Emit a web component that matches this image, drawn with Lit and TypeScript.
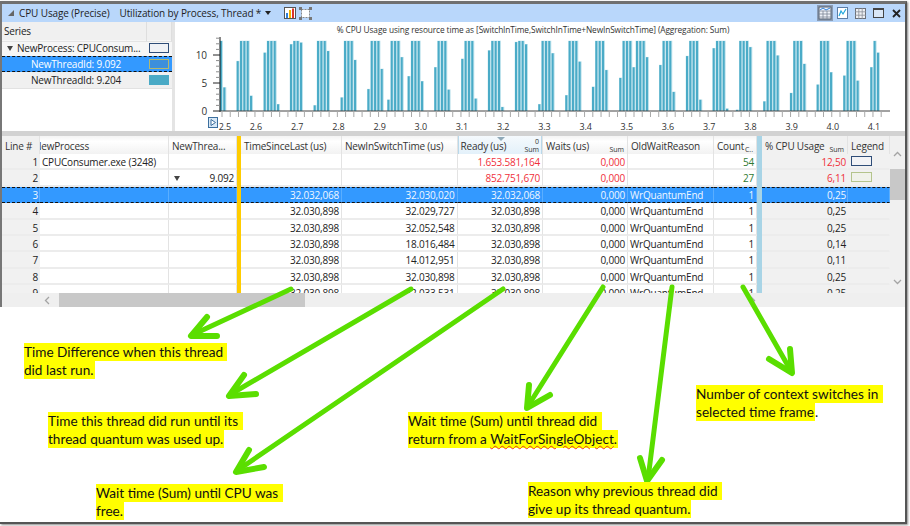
import { LitElement, html, css, svg } from "lit";
import { customElement } from "lit/decorators.js";

const GROUPS: [number, number[]][] = [
  [220, [12.5, 4.2]],
  [236.7, [8.9, 12.5, 12.5, 12.5, 2.7]],
  [263.7, [10.4, 12.5, 12.5, 12.5, 1.2]],
  [290, [11.9, 12.5, 12.5, 12.2]],
  [313.7, [1, 12.5, 12.5, 12.5, 10.7]],
  [340.7, [2.4, 12.5, 12.5, 12.5, 9.1]],
  [367.4, [3.9, 12.5, 12.5, 12.5, 7.5]],
  [387.4, [2, 12.5, 12.5, 12.5, 9.6]],
  [407.7, [6.2, 12.5, 12.5, 12.5, 5.3]],
  [434.3, [7.8, 12.5, 12.5, 12.5, 3.8]],
  [461.3, [9.3, 12.5, 12.5, 12.5, 2.2]],
  [488, [10.8, 12.5, 12.5, 12.5, 0.7]],
  [515, [12.3, 12.5, 12.5, 11.9]],
  [538.3, [1.2, 12.5, 12.5, 12.5, 10.3]],
  [565.3, [2.8, 12.5, 12.5, 12.5, 8.8]],
  [592, [4.3, 12.5, 12.5, 12.5, 7.3]],
  [619.3, [5.9, 12.5, 12.5, 12.5, 7.8, 12.5, 12.5, 12.5, 9.6]],
  [659.3, [8.2, 12.5, 12.5, 12.5, 3.4]],
  [686, [9.8, 12.5, 12.5, 12.5, 2]],
  [712.7, [11.2, 12.5, 12.5, 12.5, 0.4]],
  [736, [0.2, 12.5, 12.5, 12.5, 11.4]],
  [763.3, [1.7, 12.5, 12.5, 12.5, 9.9]],
  [790, [3.2, 12.5, 12.5, 12.5, 8.4]],
  [816.7, [4.7, 12.5, 12.5, 12.5, 6.9]],
  [843.3, [6.3, 12.5, 12.5, 12.5, 5.4]],
  [870.3, [7.8, 12.5, 10.4]],
];

const LABELS = ["2.6","2.7","2.8","2.9","3.0","3.1","3.2","3.3","3.4","3.5","3.6","3.7","3.8","3.9","4.0","4.1"];

interface Row {
  n: string; proc?: string; th?: string; a?: string; b?: string; c: string; d: string;
  why?: string; cnt: string; cpu: string; leg?: string; hot?: boolean; sel?: boolean;
}
const Q = "WrQuantumEnd";
const ROWS: Row[] = [
  { n: "1", proc: "CPUConsumer.exe (3248)", c: "1.653.581,164", d: "0,000", cnt: "54", cpu: "12,50", leg: "la", hot: true },
  { n: "2", th: "9.092", c: "852.751,670", d: "0,000", cnt: "27", cpu: "6,11", leg: "lb", hot: true },
  { n: "3", a: "32.032,068", b: "32.030,020", c: "32.032,068", d: "0,000", why: Q, cnt: "1", cpu: "0,25", sel: true },
  { n: "4", a: "32.030,898", b: "32.029,727", c: "32.030,898", d: "0,000", why: Q, cnt: "1", cpu: "0,25" },
  { n: "5", a: "32.030,898", b: "32.052,548", c: "32.030,898", d: "0,000", why: Q, cnt: "1", cpu: "0,25" },
  { n: "6", a: "32.030,898", b: "18.016,484", c: "32.030,898", d: "0,000", why: Q, cnt: "1", cpu: "0,14" },
  { n: "7", a: "32.030,898", b: "14.012,951", c: "32.030,898", d: "0,000", why: Q, cnt: "1", cpu: "0,11" },
  { n: "8", a: "32.030,898", b: "32.030,898", c: "32.030,898", d: "0,000", why: Q, cnt: "1", cpu: "0,25" },
  { n: "9", a: "32.030,898", b: "32.033,531", c: "32.030,898", d: "0,000", why: Q, cnt: "1", cpu: "0,25" },
];

const ARROWS: { line: string; head: string }[] = [
  { line: "291,289 192,335", head: "207,317 191,336 217,336" },
  { line: "411,289 231,394", head: "244,375 229,396 256,394" },
  { line: "503,289 238,470", head: "249,450 236,472 264,467" },
  { line: "603,287 528,406", head: "529,385 527,408 550,395" },
  { line: "672,287 648,479", head: "640,458 647,481 662,460" },
  { line: "743,287 791,371", head: "769,359 792,373 790,349" },
];

@customElement("app-root")
export class AppRoot extends LitElement {
  static styles = css`
    :host { display: block; width: 910px; height: 526px; position: relative; overflow: hidden; background: #fff;
      font-family: "Open Sans", "Noto Sans", sans-serif; color: #222; }
    .frame { box-sizing: border-box; margin-top: 1px; width: 907px; height: 523px; border-top: 3px solid #707070;
      border-right: 2px solid #555; border-bottom: 2px solid #555; box-shadow: 1px 1px 2px #888; background: #fff; }
    .app { box-sizing: border-box; border-left: 2px solid #777; height: 303px; display: flex; flex-direction: column; font-size: 10px; letter-spacing: -0.2px; }
    .title { height: 18px; flex: none; background: #b9d7fb; display: flex; align-items: center; font-size: 10px; letter-spacing: -0.12px; color: #1e1e1e; }
    .collapse { width: 0; height: 0; margin-left: 6px; border-style: solid; border-width: 0 0 6px 6px; border-color: transparent transparent #666 transparent; }
    .t1 { margin-left: 5px; }
    .t2 { margin-left: 10px; }
    .drop { width: 0; height: 0; margin-left: 4px; border-style: solid; border-width: 4px 3.5px 0 3.5px; border-color: #222 transparent transparent transparent; }
    .tic1 { margin-left: 13px; }
    .tic2 { margin-left: 3px; }
    .grow { flex: 1; }
    .winbtn { display: flex; align-items: center; margin-right: 4px; gap: 0; }
    .winbtn svg { display: block; }
    .w2 { margin-left: 4px; }
    .w3, .w4 { margin-left: 7px; }
    .w5 { margin-left: 8px; }
    .panes { height: 109px; flex: none; display: flex; }
    .series { width: 170px; flex: none; background: #fff; }
    .shead { height: 18px; display: grid; grid-template-columns: 145px 25px; background: #f0f0f0; }
    .shead div { border-right: 1px solid #dedede; border-bottom: 1px solid #e4e4e4; padding-left: 2px; line-height: 19px; }
    .srow { height: 16px; display: grid; grid-template-columns: 145px 25px; align-items: center; background: #fff; }
    .srow.p { background: #f6f6f6; }
    .srow.s { background: #3399ff; color: #fff; box-sizing: border-box; border-top: 1px dashed #111; border-bottom: 1px dashed #111; }
    .srow.q { background: #f0f0f0; border-bottom: 1px solid #e2e2e2; }
    .stxt { white-space: nowrap; overflow: hidden; padding-left: 29px; }
    .srow.p .stxt { padding-left: 5px; display: flex; align-items: center; gap: 4px; }
    .tri { width: 0; height: 0; border-style: solid; border-width: 5px 3.5px 0 3.5px; border-color: #444 transparent transparent transparent; flex: none; }
    .swatch { box-sizing: border-box; width: 20px; height: 10px; margin-left: 2px; }
    .sw1 { border: 1px solid #2f4d78; background: #f0f2f6; }
    .sw2 { border: 1px solid #b2b870; background: #3d8fdc; }
    .sw3 { background: #4aaac6; }
    .vsplit { width: 3px; flex: none; background: #e4e4e4; }
    .chart { flex: 1; background: #fff; position: relative; }
    .chart svg { display: block; overflow: visible; position: relative; z-index: 1; }
    .chart text { font-family: "Open Sans", "Noto Sans", sans-serif; fill: #333; letter-spacing: -0.1px; }
    .hsplit { height: 5px; flex: none; background: #d2d2d2; }
    .tablewrap { height: 157px; flex: none; display: flex; }
    .tbl { width: 888px; flex: none; overflow: hidden; background: #fff; }
    .row { display: grid; grid-template-columns: 38px 129px 68px 4px 101px 115.5px 85.5px 85px 86px 43px 5px 86px 42px; }
    .head { height: 18px; }
    .head .c { background: linear-gradient(#f4f4f4, #fff 30%, #f2f2f2); line-height: 18px; padding-top: 1px; position: relative; padding-left: 3px; text-align: left; color: #333; border-bottom: 0; }
    .head .c.frozen { background: #f1f1f1; }
    .head .c.sorted { background: linear-gradient(#f5fafd, #e3f1fa); box-shadow: inset 1px 0 #b9d8ea, inset -1px 0 #b9d8ea; }
    .head .clip { text-indent: -9px; }
    .sm { position: absolute; right: 3px; bottom: 0; font-size: 7px; line-height: 8px; color: #333; letter-spacing: 0; text-align: right; }
    .sort { position: absolute; top: 1px; left: 39px; width: 0; height: 0; border-style: solid; border-width: 4px 4px 0 4px; border-color: #8fa9b8 transparent transparent transparent; }
    .body { display: grid; grid-auto-rows: 16.4px; }
    .c { box-sizing: border-box; min-width: 0; overflow: hidden; white-space: nowrap; border-right: 1px solid #e3e3e3; border-bottom: 2px solid #ececec; line-height: 15px; padding: 1px 2px 0 2px; text-align: right; background: #fff; }
    .c.l { text-align: left; }
    .c.gray { background: #f1f1f1; padding-right: 1px; border-right-color: #f1f1f1; }
    .c.tree { display: flex; align-items: center; justify-content: space-between; padding-left: 5px; }
    .sp { min-width: 0; }
    .sp.o { background: #ffcc00; }
    .sp.b { background: #a8d4e6; }
    .red { color: #f0303a; }
    .grn { color: #2f7a33; }
    .row.sel .c { background: #3399ff; color: #f0f7ff; padding-top: 0; border-top: 1px dashed #111; border-bottom: 1px dashed #111; border-right-color: #5aaeff; }
    .leg { box-sizing: border-box; display: block; width: 21px; height: 10px; margin: 1px 0 0 1px; }
    .la { border: 1px solid #2f4d78; background: #f2f3f6; }
    .lb { border: 1px solid #b4c48c; background: #f0f2ea; }
    .vscroll { width: 15px; flex: none; background: #f0f0f0; display: flex; flex-direction: column; align-items: stretch; }
    .vtop { height: 24px; display: flex; align-items: flex-end; justify-content: center; padding-bottom: 3px; box-sizing: border-box; flex: none; }
    .vthumb { height: 31px; background: #c8c8c8; flex: none; margin-top: 9px; }
    .vgap { flex: 1; }
    .vbot { height: 12px; display: flex; justify-content: center; flex: none; margin-bottom: 2px; }
    .hscroll { height: 14px; flex: none; background: #efefef; display: flex; align-items: center; }
    .harrow { width: 57px; flex: none; display: flex; justify-content: flex-end; padding-right: 9px; box-sizing: border-box; }
    .hthumb { width: 246px; height: 14px; background: #c8c8c8; flex: none; }
    .harrow2 { margin-left: 445px; }
    .arrows { position: absolute; left: 0; top: 0; pointer-events: none; }
    .arrows polyline { fill: none; stroke: #5ade00; stroke-width: 5; stroke-linecap: round; stroke-linejoin: round; }
    .arrows polyline.hd { stroke-width: 6; }
    .note { position: absolute; font-family: Lato, "Open Sans", sans-serif; font-size: 13.6px; line-height: 18px; color: #111; white-space: nowrap; }
    .note div { height: 18px; }
    .note span.y { display: inline-block; height: 18px; background: #ffff00; padding-right: 1px; }
    .n1 { left: 24px; top: 343px; }
    .n2 { left: 48px; top: 412px; }
    .n3 { left: 96px; top: 484px; }
    .n4 { left: 408px; top: 412px; }
    .n5 { left: 528px; top: 482px; }
    .n6 { left: 696px; top: 385px; }
    .sq { text-decoration: underline wavy #e8341c 1px; text-underline-offset: 1px; }
  `;

  private chart() {
    const bars: unknown[] = [];
    for (const [x0, hs] of GROUPS) {
      hs.forEach((h, i) => {
        const x = x0 + i * 3.33;
        const y = 111 - h * 5.6;
        bars.push(svg`<rect x=${x - 0.3} y=${y - 0.3} width="3.3" height=${h * 5.6 + 0.3} fill="#bde2ec"/><rect x=${x} y=${y} width="2" height=${h * 5.6} fill="#4aabc7"/>`);
      });
    }
    const yt: unknown[] = [];
    for (let v = 0; v <= 13; v++) {
      const y = 111 - v * 5.6;
      const maj = v % 5 === 0;
      yt.push(svg`<line x1=${maj ? 213 : 216} x2="220" y1=${y} y2=${y} stroke=${maj ? "#222" : "#8c8c8c"} stroke-width="1"/>`);
    }
    const xt: unknown[] = [];
    for (let k = 0; k < 81; k++) {
      const x = 222 + k * 8.24;
      if (x > 888) break;
      const n = (x - 256) / 41.2;
      const maj = Math.abs(n - Math.round(n)) < 0.02 && n > -0.1;
      xt.push(svg`<line x1=${x} x2=${x} y1="111" y2=${maj ? 121 : 117} stroke=${maj ? "#222" : "#a8a8a8"} stroke-width="1"/>`);
    }
    return html`<svg width="730" height="109" viewBox="175 22 730 109">
      <text x="533" y="33" font-size="8.3" text-anchor="middle">% CPU Usage using resource time as [SwitchInTime,SwitchInTime+NewInSwitchTime] (Aggregation: Sum)</text>
      ${bars}
      <line x1="220" x2="220" y1="37" y2="112" stroke="#111" stroke-width="1"/>
      ${yt}
      <line x1="220" x2="890" y1="111" y2="111" stroke="#444" stroke-width="1"/>
      ${xt}
      <text x="207" y="58.5" font-size="10" text-anchor="end">10</text>
      <text x="207" y="87" font-size="10" text-anchor="end">5</text>
      <text x="207" y="114.5" font-size="10" text-anchor="end">0</text>
      <text x="225" y="130" font-size="9" text-anchor="middle">2.5</text>
      ${LABELS.map((l, i) => svg`<text x=${256 + i * 41.2} y="130" font-size="9" text-anchor="middle">${l}</text>`)}
      <rect x="208.5" y="117.5" width="9" height="10" fill="#d8e8f6" stroke="#3c6f9e"/>
      <path d="M211 119.5 L215.5 122.5 L211 125.5 Z" fill="#fff" stroke="#3c6f9e" stroke-width="1"/>
    </svg>`;
  }

  private row(r: Row) {
    const hot = r.hot ? "red" : "";
    return html`<div class="row ${r.sel ? "sel" : ""}">
      <div class="c gray">${r.n}</div>
      <div class="c l">${r.proc ?? ""}</div>
      ${r.th ? html`<div class="c tree"><span class="tri"></span><span>${r.th}</span></div>` : html`<div class="c"></div>`}
      <div class="sp o"></div>
      <div class="c">${r.a ?? ""}</div>
      <div class="c">${r.b ?? ""}</div>
      <div class="c ${hot}">${r.c}</div>
      <div class="c ${hot}">${r.d}</div>
      <div class="c l">${r.why ?? ""}</div>
      <div class="c ${r.hot ? "grn" : ""}">${r.cnt}</div>
      <div class="sp b"></div>
      <div class="c gray ${hot}">${r.cpu}</div>
      <div class="c gray">${r.leg ? html`<span class="leg ${r.leg}"></span>` : ""}</div>
    </div>`;
  }

  render() {
    return html`
      <div class="frame">
        <div class="app">
          <div class="title">
            <span class="collapse"></span>
            <span class="t1">CPU Usage (Precise)</span>
            <span class="t2">Utilization by Process, Thread *</span>
            <span class="drop"></span>
            <svg class="tic1" width="12" height="12" viewBox="0 0 12 12">
              <rect x="0.5" y="0.5" width="11" height="11" fill="#fff" stroke="#555"/>
              <rect x="2" y="6" width="2" height="5" fill="#2f7fd8"/><rect x="5" y="3" width="2" height="8" fill="#f0b400"/>
              <rect x="8" y="1.5" width="2" height="9.5" fill="#d9342b"/>
            </svg>
            <svg class="tic2" width="13" height="13" viewBox="0 0 13 13">
              <rect x="2.5" y="2.5" width="8" height="8" fill="#fff" stroke="#888" stroke-dasharray="2 1"/>
              <rect x="0" y="0" width="3" height="3" fill="#777"/><rect x="10" y="0" width="3" height="3" fill="#777"/>
              <rect x="0" y="10" width="3" height="3" fill="#777"/><rect x="10" y="10" width="3" height="3" fill="#777"/>
            </svg>
            <span class="grow"></span>
            <div class="winbtn">
              <svg width="16" height="16" viewBox="0 0 16 16">
                <rect width="16" height="16" fill="#8b9cb4"/><rect x="2" y="2" width="12" height="12" fill="#eef2f8" stroke="#56606e"/>
                <path d="M2 6H14M2 9H14M2 12H14M6 6V14M10 6V14" stroke="#7c8694" stroke-width="0.8"/>
                <path d="M3 5L6 3L9 5L13 3" stroke="#2f7fd8" fill="none"/>
              </svg>
              <svg class="w2" width="11" height="12" viewBox="0 0 11 12">
                <rect x="0.5" y="0.5" width="10" height="11" fill="#fff" stroke="#5d7da6"/>
                <path d="M2 9L4 4L6 7L9 2" stroke="#1fa6dd" stroke-width="1.2" fill="none"/>
              </svg>
              <svg class="w3" width="11" height="11" viewBox="0 0 11 11">
                <rect x="0.5" y="0.5" width="10" height="10" fill="#eef0f4" stroke="#6a6f78"/>
                <path d="M3.8 0V11M7.2 0V11M0 3.8H11M0 7.2H11" stroke="#8a8f98" stroke-width="0.8"/>
              </svg>
              <svg class="w4" width="11" height="10" viewBox="0 0 11 10">
                <rect x="0.5" y="0.5" width="10" height="9" fill="#d9e6f6" stroke="#444"/><rect x="0" y="0" width="11" height="2" fill="#444"/>
              </svg>
              <svg class="w5" width="9" height="9" viewBox="0 0 9 9">
                <path d="M1 1L8 8M8 1L1 8" stroke="#222" stroke-width="1.8"/>
              </svg>
            </div>
          </div>
          <div class="panes">
            <div class="series">
              <div class="shead"><div>Series</div><div></div></div>
              <div class="srow p"><div class="stxt"><span class="tri"></span><span>NewProcess: CPUConsum...</span></div><span class="swatch sw1"></span></div>
              <div class="srow s"><div class="stxt">NewThreadId: 9.092</div><span class="swatch sw2"></span></div>
              <div class="srow q"><div class="stxt">NewThreadId: 9.204</div><span class="swatch sw3"></span></div>
            </div>
            <div class="vsplit"></div>
            <div class="chart">${this.chart()}</div>
          </div>
          <div class="hsplit"></div>
          <div class="tablewrap">
            <div class="tbl">
              <div class="row head">
                <div class="c frozen">Line #</div>
                <div class="c clip">NewProcess</div>
                <div class="c">NewThrea...</div>
                <div class="sp o"></div>
                <div class="c">TimeSinceLast (us)</div>
                <div class="c">NewInSwitchTime (us)</div>
                <div class="c sorted">Ready (us)<span class="sort"></span><span class="sm">0<br />Sum</span></div>
                <div class="c">Waits (us)<span class="sm">Sum</span></div>
                <div class="c">OldWaitReason</div>
                <div class="c">Count<span class="sm">C..</span></div>
                <div class="sp b"></div>
                <div class="c frozen">% CPU Usage<span class="sm">Sum</span></div>
                <div class="c frozen">Legend</div>
              </div>
              <div class="body">${ROWS.map((r) => this.row(r))}</div>
            </div>
            <div class="vscroll">
              <div class="vtop"><svg width="9" height="6" viewBox="0 0 9 6"><path d="M1 5L4.5 1.5L8 5" stroke="#a4a4a4" stroke-width="1.3" fill="none"/></svg></div>
              <div class="vthumb"></div>
              <div class="vgap"></div>
              <div class="vbot"><svg width="9" height="6" viewBox="0 0 9 6"><path d="M1 1L4.5 4.5L8 1" stroke="#a4a4a4" stroke-width="1.3" fill="none"/></svg></div>
            </div>
          </div>
          <div class="hscroll">
            <div class="harrow"><svg width="6" height="9" viewBox="0 0 6 9"><path d="M5 1L1.5 4.5L5 8" stroke="#a4a4a4" stroke-width="1.3" fill="none"/></svg></div>
            <div class="hthumb"></div>
            <svg class="harrow2" width="6" height="9" viewBox="0 0 6 9"><path d="M1 1L4.5 4.5L1 8" stroke="#a4a4a4" stroke-width="1.3" fill="none"/></svg>
          </div>
        </div>
      </div>
      <svg class="arrows" width="910" height="526" viewBox="0 0 910 526">
        ${ARROWS.map((a) => svg`<polyline points=${a.line}/><polyline class="hd" points=${a.head}/>`)}
      </svg>
      <div class="note n1"><div><span class="y">Time Difference when this thread&nbsp;</span></div><div><span class="y">did last run.</span></div></div>
      <div class="note n2"><div><span class="y">Time this thread did run until its&nbsp;</span></div><div><span class="y">thread quantum was used up.</span></div></div>
      <div class="note n3"><div><span class="y">Wait time (Sum) until CPU was&nbsp;</span></div><div><span class="y">free.</span></div></div>
      <div class="note n4"><div><span class="y">Wait time (Sum) until thread did&nbsp;</span></div><div><span class="y">return from a <span class="sq">WaitForSingleObject</span>.</span></div></div>
      <div class="note n5"><div><span class="y">Reason why previous thread did&nbsp;</span></div><div><span class="y">give up its thread quantum.</span></div></div>
      <div class="note n6"><div><span class="y">Number of context switches in&nbsp;</span></div><div><span class="y">selected time frame</span>.</div></div>
    `;
  }
}
